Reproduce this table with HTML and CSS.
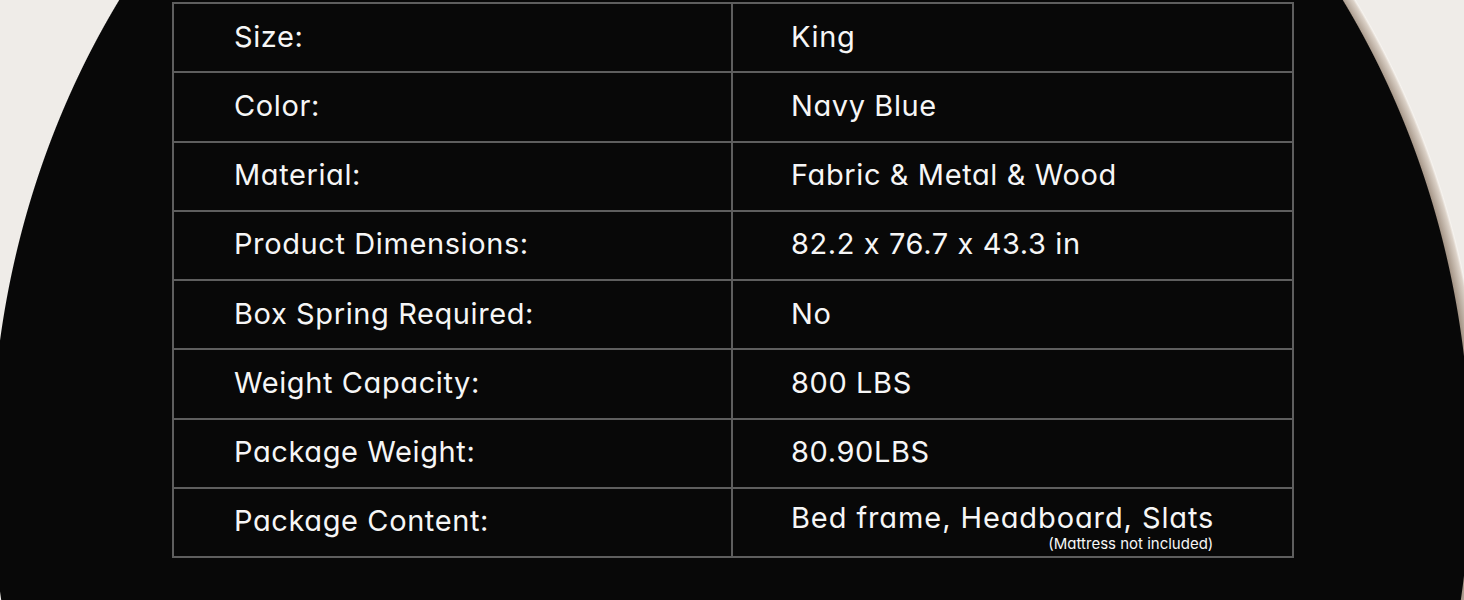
FILE: index.html
```html
<!DOCTYPE html>
<html>
<head>
<meta charset="utf-8">
<link rel="stylesheet" href="styles.css">
</head>
<body>
<div class="spec">
  <div class="row"><div class="cell label">Size:</div><div class="cell value">King</div></div>
  <div class="row"><div class="cell label">Color:</div><div class="cell value">Navy Blue</div></div>
  <div class="row"><div class="cell label">Material:</div><div class="cell value">Fabric &amp; Metal &amp; Wood</div></div>
  <div class="row"><div class="cell label">Product Dimensions:</div><div class="cell value">82.2 x 76.7 x 43.3 in</div></div>
  <div class="row"><div class="cell label">Box Spring Required:</div><div class="cell value">No</div></div>
  <div class="row"><div class="cell label">Weight Capacity:</div><div class="cell value">800 LBS</div></div>
  <div class="row"><div class="cell label">Package Weight:</div><div class="cell value">80.90LBS</div></div>
  <div class="row last"><div class="cell label">Package Content:</div><div class="cell value"><div class="stack"><span class="main">Bed frame, Headboard, Slats</span><span class="note">(Mattress not included)</span></div></div></div>
</div>
</body>
</html>
```

FILE: styles.css
```css
html, body {
  margin: 0;
  padding: 0;
}
body {
  width: 1464px;
  height: 600px;
  overflow: hidden;
  background:
    radial-gradient(ellipse 740px 830px at 731px 466px, #080808 739px, rgba(8,8,8,0) 740px),
    radial-gradient(ellipse 740px 830px at 744px 466px, #7e6f62 722px, #a99a8c 728px, #dcd2c8 737px, #f6f3ef 739px, rgba(240,237,233,0) 740px),
    #efece8;
  font-family: Inter, "Liberation Sans", sans-serif;
  font-feature-settings: "cv11" 1;
  color: #f6f6f6;
  padding-top: 2px;
  box-sizing: border-box;
}
.spec {
  margin-left: 172px;
  width: 1122px;
  border-top: 2px solid #5e5e5e;
  border-left: 2px solid #5e5e5e;
  box-sizing: border-box;
}
.row {
  display: grid;
  grid-template-columns: 559px 561px;
  height: 69.25px;
  border-bottom: 2px solid #5e5e5e;
  box-sizing: border-box;
}
.cell {
  border-right: 2px solid #5e5e5e;
  display: flex;
  align-items: center;
  font-size: 29px;
  letter-spacing: 0.6px;
  padding-bottom: 3px;
}
.label { padding-left: 60px; }
.value { padding-left: 58px; }
.last .value { align-items: flex-start; padding-top: 13px; padding-bottom: 0; }
.stack {
  display: flex;
  flex-direction: column;
  align-items: flex-end;
}
.main {
  line-height: 1.1;
  letter-spacing: 0.9px;
}
.note {
  font-size: 15px;
  line-height: 1;
  letter-spacing: 0;
  margin-top: 2px;
  margin-right: 1px;
}
```
